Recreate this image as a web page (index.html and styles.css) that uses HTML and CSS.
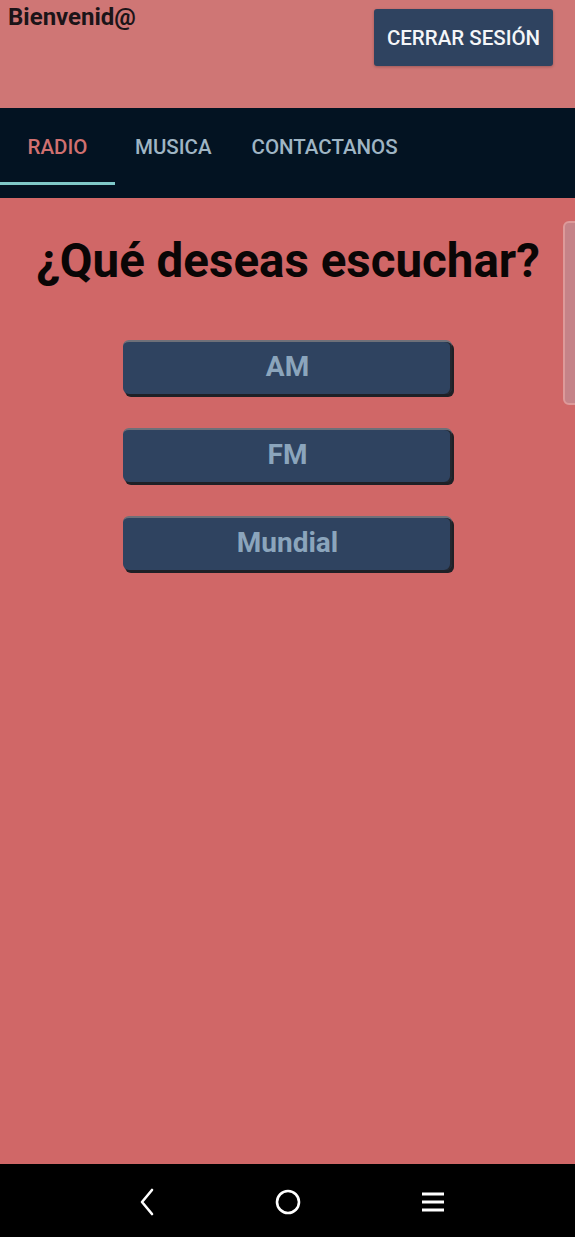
FILE: index.html
```html
<!DOCTYPE html>
<html lang="es">
<head>
<meta charset="utf-8">
<link rel="stylesheet" href="styles.css">
</head>
<body>
<div class="app">
  <header class="top">
    <span class="welcome">Bienvenid@</span>
    <button class="logout">CERRAR SESIÓN</button>
  </header>
  <nav class="tabs">
    <div class="tab active">RADIO</div>
    <div class="tab">MUSICA</div>
    <div class="tab">CONTACTANOS</div>
  </nav>
  <main class="content">
    <h1 class="title">¿Qué deseas escuchar?</h1>
    <div class="choices">
      <button class="choice">AM</button>
      <button class="choice">FM</button>
      <button class="choice">Mundial</button>
    </div>
    <div class="scroll-hint"></div>
  </main>
  <footer class="sysnav">
    <svg class="ico" width="24" height="30" viewBox="0 0 24 30"><path d="M18 3 L8 15 L18 27" fill="none" stroke="#fff" stroke-width="2.6" stroke-linecap="round" stroke-linejoin="round"/></svg>
    <svg class="ico" width="30" height="30" viewBox="0 0 30 30"><circle cx="15" cy="15" r="11" fill="none" stroke="#fff" stroke-width="2.6"/></svg>
    <svg class="ico" width="30" height="30" viewBox="0 0 30 30"><path d="M4 7 H26 M4 15 H26 M4 23 H26" fill="none" stroke="#fff" stroke-width="2.8"/></svg>
  </footer>
</div>
</body>
</html>
```
FILE: styles.css
```css
* { box-sizing: border-box; }
html, body { margin: 0; padding: 0; }
body {
  width: 575px;
  height: 1237px;
  font-family: Roboto, "Liberation Sans", sans-serif;
  background: #d06767;
  overflow: hidden;
}
.app {
  display: flex;
  flex-direction: column;
  height: 1237px;
}
.top {
  height: 108px;
  background: #cf7675;
  display: flex;
  justify-content: space-between;
  align-items: flex-start;
  padding: 3px 22px 0 8px;
}
.welcome {
  font-weight: 700;
  font-size: 24px;
  color: #1b1418;
  line-height: 28px;
}
.logout {
  margin-top: 6px;
  width: 179px;
  height: 57px;
  border: none;
  border-radius: 3px;
  background: #2f4360;
  color: #f4f6f8;
  font-family: Roboto, "Liberation Sans", sans-serif;
  font-weight: 500;
  font-size: 20.5px;
  box-shadow: 0 1px 3px rgba(0,0,0,0.25);
  padding: 0;
}
.tabs {
  height: 90px;
  background: #031322;
  display: flex;
  align-items: stretch;
}
.tab {
  display: flex;
  align-items: center;
  justify-content: center;
  font-size: 20.5px;
  font-weight: 500;
  color: #9fb5c4;
  padding: 4px 20px 0 20px;
  border-bottom: 3px solid transparent;
  margin-bottom: 13px;
}
.tab.active {
  width: 115px;
  color: #d07070;
  border-bottom-color: #7fc9c9;
}
.content {
  flex: 1;
  position: relative;
  display: flex;
  flex-direction: column;
  align-items: center;
}
.title {
  margin: 36px 0 0 0;
  font-size: 47.5px;
  font-weight: 700;
  color: #0a0606;
  line-height: 54px;
  padding-left: 1px;
}
.choices {
  margin-top: 52px;
  display: flex;
  flex-direction: column;
  gap: 34px;
}
.choice {
  width: 329px;
  height: 54px;
  background: #2f4360;
  border: none;
  border-top: 2px solid #6e7079;
  border-radius: 6px;
  box-shadow: 2px 3px 0 #1f2026, inset -2px 0 0 #23262e;
  color: #8ba5bc;
  font-family: Roboto, "Liberation Sans", sans-serif;
  font-weight: 700;
  font-size: 28px;
  padding: 0 0 3px 0;
}
.scroll-hint {
  position: absolute;
  right: -6px;
  top: 23px;
  width: 18px;
  height: 184px;
  border: 2px solid #dd9a9a;
  border-radius: 6px;
  background: #c58388;
}
.sysnav {
  height: 73px;
  background: #000;
  display: flex;
  justify-content: center;
  align-items: center;
  gap: 115px;
  padding-top: 2px;
  padding-left: 6px;
}
```
